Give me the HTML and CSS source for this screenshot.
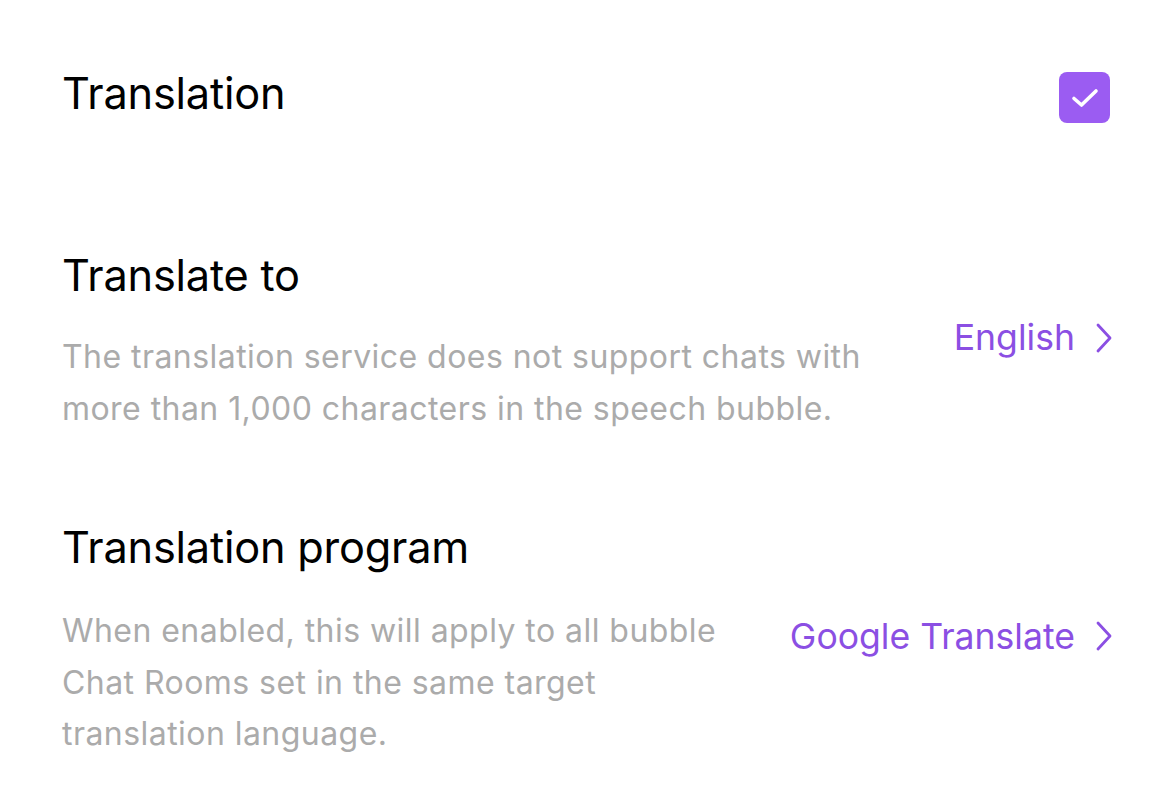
FILE: index.html
```html
<!DOCTYPE html>
<html>
<head>
<meta charset="utf-8">
<link rel="stylesheet" href="styles.css">
</head>
<body>
<div class="page">
  <div class="row row-top">
    <div class="title">Translation</div>
    <div class="checkbox">
      <svg width="30" height="22" viewBox="0 0 30 22"><path d="M4 11.5 L11.5 18 L26 4" fill="none" stroke="#fff" stroke-width="3.6" stroke-linecap="round" stroke-linejoin="round"/></svg>
    </div>
  </div>
  <div class="row row-lang">
    <div class="left">
      <div class="title">Translate to</div>
      <div class="desc">The translation service does not support chats with more than 1,000 characters in the speech bubble.</div>
    </div>
    <div class="value">English<svg class="chev" width="18" height="32" viewBox="0 0 18 32"><path d="M3 3 L15 16 L3 29" fill="none" stroke="currentColor" stroke-width="2.8" stroke-linecap="round" stroke-linejoin="round"/></svg></div>
  </div>
  <div class="row row-prog">
    <div class="left narrow">
      <div class="title">Translation program</div>
      <div class="desc">When enabled, this will apply to all bubble Chat Rooms set in the same target translation language.</div>
    </div>
    <div class="value">Google Translate<svg class="chev" width="18" height="32" viewBox="0 0 18 32"><path d="M3 3 L15 16 L3 29" fill="none" stroke="currentColor" stroke-width="2.8" stroke-linecap="round" stroke-linejoin="round"/></svg></div>
  </div>
</div>
</body>
</html>
```
FILE: styles.css
```css
html, body {
  margin: 0;
  padding: 0;
  background: #fff;
}
body {
  font-family: Inter, "Noto Sans", sans-serif;
  width: 1170px;
  height: 788px;
  overflow: hidden;
}
.page {
  padding: 0 57px 0 62px;
}
.row {
  display: flex;
  align-items: center;
  justify-content: space-between;
}
.row-top {
  align-items: flex-start;
  padding-top: 64px;
  padding-right: 3px;
}
.row-top .checkbox {
  margin-top: 8px;
}
.title {
  font-size: 43.3px;
  color: #000;
  line-height: 56px;
  letter-spacing: -0.2px;
}
.row-top .title {
  line-height: 58px;
}
.checkbox {
  width: 51px;
  height: 51px;
  border-radius: 8px;
  background: #9b5cf2;
  display: flex;
  align-items: center;
  justify-content: center;
}
.row-lang {
  margin-top: 124px;
}
.row-prog {
  margin-top: 85px;
}
.left {
  width: 830px;
}
.left.narrow {
  width: 700px;
}
.desc {
  margin-top: 28px;
  font-size: 32px;
  line-height: 51.5px;
  color: #ababab;
  letter-spacing: 0.45px;
}
.row-prog .desc {
  margin-top: 30px;
}
.value {
  display: flex;
  align-items: center;
  margin-bottom: 6px;
  font-size: 35.6px;
  color: #8b4fe3;
  white-space: nowrap;
}
.chev {
  margin-left: 20px;
}
```
